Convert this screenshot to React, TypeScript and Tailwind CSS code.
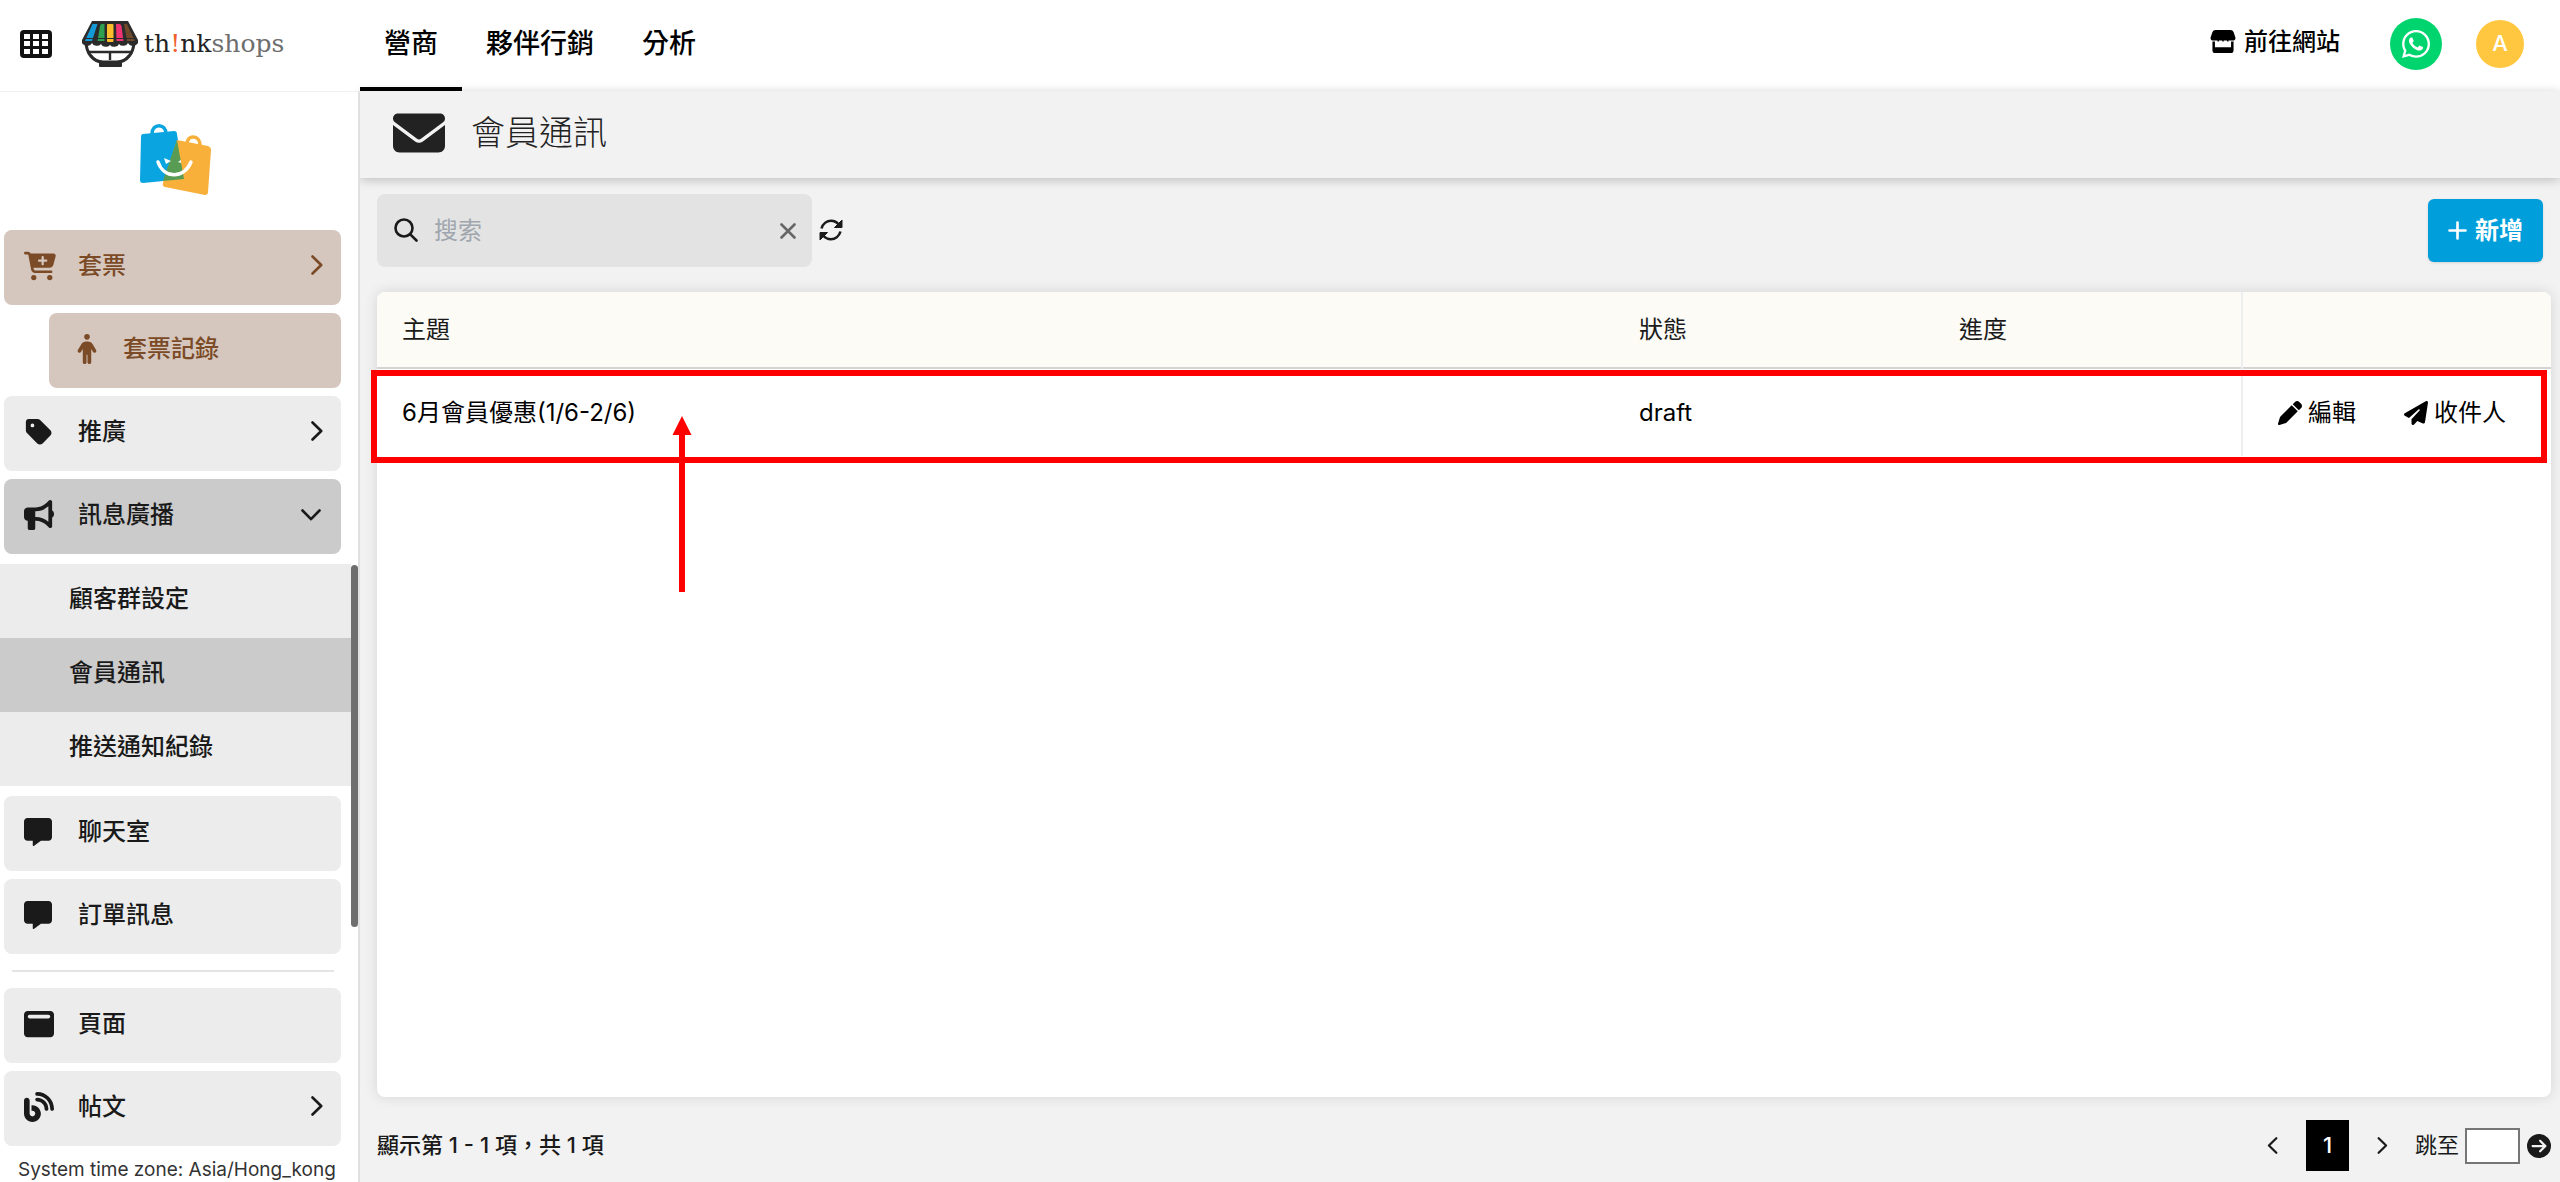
import type { ReactNode } from "react";
import {
  FaBlog,
  FaBullhorn,
  FaCartPlus,
  FaCircleArrowRight,
  FaEnvelope,
  FaMessage,
  FaPaperPlane,
  FaPen,
  FaPerson,
  FaTag,
  FaWhatsapp,
  FaWindowMaximize,
} from "react-icons/fa6";

function Chevron({ className = "" }: { className?: string }) {
  return (
    <svg viewBox="0 0 12 20" className={className} fill="none" stroke="currentColor" strokeWidth="2.6" strokeLinecap="round" strokeLinejoin="round">
      <path d="M1.500 1.500l8.700 8.500-8.700 8.500" />
    </svg>
  );
}

function SearchIcon() {
  return (
    <svg viewBox="0 0 24 24" className="mb-0.5 h-6 w-6 shrink-0" fill="none" stroke="currentColor" strokeWidth="2.6" strokeLinecap="round">
      <circle cx="10" cy="10" r="8.500" />
      <path d="M16.300 16.300l6.200 6.200" />
    </svg>
  );
}

function RefreshIcon() {
  return (
    <svg viewBox="0 0 24 24" className="mb-0.5 h-6 w-6" fill="none" stroke="currentColor" strokeWidth="2.600">
      <path d="M2.500 10.500C4 5.500 8 2.800 12 2.800c3.500 0 6 1.500 8 4M21.500 13.500c-1.500 5-5.500 7.700-9.500 7.700-3.500 0-6-1.500-8-4" />
      <path d="M23 2v7.500h-7.500zM1 22v-7.500h7.500z" fill="currentColor" strokeWidth="1" strokeLinejoin="round" />
    </svg>
  );
}

function GridIcon() {
  return (
    <svg viewBox="0 0 32 28" className="h-7 w-8">
      <rect width="32" height="28" rx="4" fill="#111" />
      {[4, 13, 22].map((x) =>
        [4, 11, 19].map((y) => <rect key={`${x}-${y}`} x={x} y={y} width="6" height="5" fill="#fff" />)
      )}
    </svg>
  );
}

function BowlLogo() {
  return (
    <svg viewBox="0 0 56 46" className="h-[46px] w-14">
      <path d="M4 20c0 12 7 21 17 21h14c10 0 17-9 17-21z" fill="#fff" stroke="#2b2b2b" strokeWidth="3" />
      <path d="M5 31h46M28 32v7" stroke="#2b2b2b" strokeWidth="2.4" />
      <path d="M9 34c3 5 8 7 12 7h14c4 0 9-2 12-7" fill="none" stroke="#2b2b2b" strokeWidth="2" />
      <rect x="17" y="41" width="23" height="5" rx="1" fill="#2b2b2b" />
      <path d="M10 0h36l10 19a5 4 0 0 1-10 3 5 4 0 0 1-9 1 5 4 0 0 1-9 1 5 4 0 0 1-9-1 5 4 0 0 1-9-1 5 4 0 0 1-10-3z" fill="#2b2b2b" />
      <path d="M10.500 3h5L10 20H3z" fill="#149bd7" />
      <path d="M18 5q0-2 2-2h2.500v17H15.500z" fill="#2fa04f" />
      <rect x="25" y="3" width="6.500" height="18" rx="1" fill="#fdbc2c" />
      <path d="M34 3h3q2 0 2.500 2l2 15h-7z" fill="#ee3272" />
      <path d="M42 3h3l8 17h-8z" fill="#70482a" />
      <path d="M3 17.500h50" stroke="#2b2b2b" strokeWidth="1.200" />
    </svg>
  );
}

function BagsLogo() {
  return (
    <svg viewBox="0 0 72 72" className="h-[72px] w-[72px]">
      <path d="M13 10c0-11 14-11 14 0" fill="none" stroke="#0aa5e0" strokeWidth="3.500" />
      <path d="M48 20c0-10 13-9 13 1" fill="none" stroke="#f9b03a" strokeWidth="3.500" />
      <path d="M4 10l31-3q3 0 3 3l7 45-41 4q-3 0-3-3l1-43q0-3 2-3z" fill="#0aa5e0" />
      <path d="M38 16l31 6q3 1 3 4l-3 42q0 3-3 3l-40-8q-3-1-2-4z" fill="#f9b03a" />
      <path d="M38 16l7 39-21 2z" fill="#589b52" />
      <path d="M19 38c6 17 26 17 33 0" fill="none" stroke="#fff" strokeWidth="3.500" strokeLinecap="round" />
      <path d="M25 34l7 3-5 3z" fill="#fff" />
      <path d="M42 36l-3 2 3 1z" fill="#fff" />
    </svg>
  );
}

function StoreIcon() {
  return (
    <svg viewBox="0 0 26 25" className="h-6 w-[26px]">
      <path d="M5 0h16q2 0 3 2l2 6q0 3-3 3H3Q0 11 0 8l2-6q1-2 3-2z" fill="#000" />
      <path d="M2 12h2.600v6h16.800v-6H24v9q0 3-3 3H5q-3 0-3-3z" fill="#000" />
      <path d="M8 10v2M13 10v2M18 10v2" stroke="#000" strokeWidth="1.500" />
    </svg>
  );
}

type SideItemProps = {
  icon: ReactNode;
  label: string;
  arrow?: "right" | "down";
  className?: string;
};

function SideItem({ icon, label, arrow, className = "bg-[#ececec] text-[#1a1a1a]" }: SideItemProps) {
  return (
    <a href="#" className={`flex h-[75px] items-center rounded-lg pr-[18px] pl-5 ${className}`}>
      <span className="flex w-[54px] shrink-0 pb-1 text-[30px]">{icon}</span>
      <span className="flex-1 pb-1 text-2xl font-medium">{label}</span>
      {arrow === "right" && <Chevron className="mb-1.5 h-5 w-3" />}
      {arrow === "down" && <Chevron className="mr-1.5 mb-1 h-5 w-3 rotate-90" />}
    </a>
  );
}

const tabs = ["營商", "夥伴行銷", "分析"];
const subItems = ["顧客群設定", "會員通訊", "推送通知紀錄"];

export default function App() {
  return (
    <div className="flex min-h-screen flex-col bg-[#f2f2f2] font-['Inter','Noto_Sans_CJK_TC',sans-serif] text-2xl text-[#1a1a1a]">
      {/* Top bar */}
      <header className="flex h-[91px] shrink-0 bg-white text-black">
        <div className="flex w-[360px] shrink-0 items-center pb-1 pl-5">
          <button type="button" aria-label="選單">
            <GridIcon />
          </button>
          <a href="#" className="ml-[30px] flex items-center">
            <BowlLogo />
            <span className="ml-1.5 font-['DejaVu_Serif',serif] text-[25px] leading-8 text-[#222]">
              th<span className="text-[#f0602a]">!</span>nk<span className="text-[#6e6e6e]">shops</span>
            </span>
          </a>
        </div>
        <nav className="flex flex-1">
          {tabs.map((tab, i) => (
            <a
              key={tab}
              href="#"
              className={`flex items-center border-b-4 px-6 text-[27px] font-medium ${i === 0 ? "border-black" : "border-transparent"}`}
            >
              {tab}
            </a>
          ))}
        </nav>
        <div className="flex items-center pr-9 pb-[3px]">
          <a href="#" className="flex items-center gap-2 pb-1 font-medium">
            <StoreIcon />
            前往網站
          </a>
          <a href="#" aria-label="WhatsApp" className="ml-[50px] flex h-[52px] w-[52px] items-center justify-center rounded-full bg-[#00d46f] text-white">
            <FaWhatsapp className="h-8 w-8" />
          </a>
          <button type="button" className="ml-[34px] h-12 w-12 rounded-full bg-[#ffc73f] text-[22px] font-medium text-white">
            A
          </button>
        </div>
      </header>

      <div className="flex flex-1">
        {/* Sidebar */}
        <aside className="relative w-[360px] shrink-0 border-t border-r-2 border-t-[#f0f0f0] border-r-[#e0e0e0] bg-white">
          <div className="flex justify-center pt-8 pr-2 pb-[34px]">
            <BagsLogo />
          </div>
          <div className="mr-[17px] ml-1 flex flex-col gap-2">
            <SideItem icon={<FaCartPlus className="h-8 w-8" />} label="套票" arrow="right" className="bg-[#d5c7be] text-[#7b4a26]" />
            <SideItem icon={<FaPerson className="ml-[3px]" />} label="套票記錄" className="ml-[45px] bg-[#d5c7be] text-[#7b4a26]" />
            <SideItem icon={<FaTag />} label="推廣" arrow="right" />
            <SideItem icon={<FaBullhorn />} label="訊息廣播" arrow="down" className="bg-[#cbcbcb] text-[#1a1a1a]" />
          </div>
          <div className="my-2.5 mr-[7px]">
            {subItems.map((item) => (
              <a
                key={item}
                href="#"
                className={`flex h-[74px] items-center pb-1 pl-[69px] font-medium ${item === "會員通訊" ? "bg-[#cbcbcb]" : "bg-[#ececec]"}`}
              >
                {item}
              </a>
            ))}
          </div>
          <div className="mr-[17px] ml-1 flex flex-col gap-2">
            <SideItem icon={<FaMessage className="h-7 w-7" />} label="聊天室" />
            <SideItem icon={<FaMessage className="h-7 w-7" />} label="訂單訊息" />
            <hr className="my-2 mr-[7px] ml-2 border-t-2 border-[#e4e4e4]" />
            <SideItem icon={<FaWindowMaximize />} label="頁面" />
            <SideItem icon={<FaBlog />} label="帖文" arrow="right" />
          </div>
          <p className="pt-3 pl-[18px] text-[19px] leading-6 text-[#333]">System time zone: Asia/Hong_kong</p>
          <div className="absolute top-[473px] right-0 h-[362px] w-[7px] rounded bg-[#6e6e6e]" />
        </aside>

        {/* Content */}
        <main className="flex min-w-0 flex-1 flex-col">
          <div className="flex h-[87px] items-center bg-[#f2f2f2] pb-1 pl-[33px] shadow-[0_2px_10px_rgba(0,0,0,0.22)]">
            <FaEnvelope className="h-[52px] w-[52px] text-[#222]" />
            <h1 className="ml-[26px] text-[34px] leading-10 font-light text-[#222]">會員通訊</h1>
          </div>

          <div className="flex flex-1 flex-col pr-[9px] pl-[17px]">
            <div className="mt-4 flex items-center">
              <label className="flex h-[73px] w-[435px] items-center rounded-lg bg-[#e3e3e3] pr-4 pl-[17px]">
                <SearchIcon />
                <input type="text" aria-label="搜索" placeholder="搜索" className="ml-4 min-w-0 flex-1 bg-transparent outline-none placeholder:text-[#a0a6ae]" />
                <button type="button" aria-label="清除">
                  <svg viewBox="0 0 16 16" className="h-4 w-4" stroke="#666" strokeWidth="2.600" strokeLinecap="round">
                    <path d="M1.500 1.500l13 13M14.500 1.500l-13 13" />
                  </svg>
                </button>
              </label>
              <button type="button" aria-label="重新整理" className="ml-[7px]">
                <RefreshIcon />
              </button>
              <button type="button" className="mr-2 ml-auto flex h-[63px] items-center gap-2 rounded-md bg-[#009fdb] px-5 font-bold text-white shadow-sm">
                <svg viewBox="0 0 19 19" className="h-[19px] w-[19px]" stroke="currentColor" strokeWidth="2.600" strokeLinecap="round">
                  <path d="M9.500 1.500v16M1.500 9.500h16" />
                </svg>
                新增
              </button>
            </div>

            <div className="relative mt-[25px] flex-1 rounded-lg bg-white shadow-[0_0_14px_rgba(0,0,0,0.12)]">
              <table className="w-full table-fixed text-left">
                <thead>
                  <tr className="h-[76px] border-b-2 border-[#d4d4d4] bg-[#fcfbf6]">
                    <th className="rounded-tl-lg pl-[25px] font-normal">主題</th>
                    <th className="w-80 pl-[25px] font-normal">狀態</th>
                    <th className="w-[308px] pl-[25px] font-normal">進度</th>
                    <th className="w-[309px] rounded-tr-lg border-l-2 border-[#eceef0]" aria-label="操作" />
                  </tr>
                </thead>
                <tbody>
                  <tr className="h-[88px] text-black">
                    <td className="pl-[25px]">6月會員優惠(1/6-2/6)</td>
                    <td className="pl-[25px]">draft</td>
                    <td />
                    <td className="border-l-2 border-[#eceef0] pl-[35px]">
                      <div className="flex items-center gap-12">
                        <a href="#" className="flex items-center gap-1.5">
                          <FaPen className="h-6 w-6" />
                          編輯
                        </a>
                        <a href="#" className="flex items-center gap-1.5">
                          <FaPaperPlane className="h-6 w-6" />
                          收件人
                        </a>
                      </div>
                    </td>
                  </tr>
                </tbody>
              </table>

              {/* Highlight on the first row */}
              <div className="pointer-events-none absolute top-[78px] right-1 -left-1.5 h-[93px] border-[6px] border-[#ff0000]" />
              <svg viewBox="0 0 20 176" className="pointer-events-none absolute top-[124px] left-[295px] h-44 w-5" fill="#ff0000">
                <path d="M10 0l9.500 19H13v157H7V19H.5z" />
              </svg>
            </div>

            <div className="flex h-[85px] items-center pt-3 text-[22px]">
              <span className="font-medium">顯示第 1 - 1 項，共 1 項</span>
              <div className="ml-auto flex items-center">
                <button type="button" aria-label="上一頁">
                  <Chevron className="h-[17px] w-[11px] rotate-180" />
                </button>
                <button type="button" className="mx-[28px] h-[51px] w-[43px] bg-black font-medium text-white">
                  1
                </button>
                <button type="button" aria-label="下一頁">
                  <Chevron className="h-[17px] w-[11px]" />
                </button>
                <label htmlFor="jump" className="ml-[27px]">
                  跳至
                </label>
                <input id="jump" type="text" className="ml-1.5 h-9 w-[55px] border-2 border-[#767676] bg-white px-1" />
                <button type="button" aria-label="前往" className="ml-[7px]">
                  <FaCircleArrowRight className="h-6 w-6" />
                </button>
              </div>
            </div>
          </div>
        </main>
      </div>
    </div>
  );
}
